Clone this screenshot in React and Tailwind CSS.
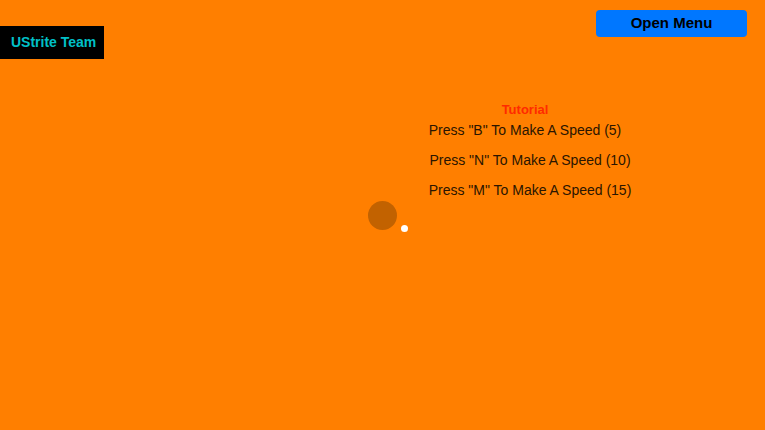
export default function App() {
  return (
    <div
      className="relative w-[765px] h-[430px] overflow-hidden bg-[#ff7f00]"
      style={{ fontFamily: '"Liberation Sans", Arial, sans-serif' }}
    >
      <div className="flex items-start justify-between">
        <div className="mt-[26px] w-[104px] h-[33px] bg-black flex items-center pl-[11px] text-[14px] font-bold text-[#00c0c8]">
          UStrite Team
        </div>
        <button className="mt-[10px] mr-[18px] w-[151px] h-[27px] rounded-[4px] bg-[#0077ff] text-[15px] font-bold text-black flex items-center justify-center">
          Open Menu
        </button>
      </div>

      <div className="absolute left-[410px] top-[102px] w-[240px] flex flex-col items-center text-[14px] text-[#2a1500]">
        <div className="text-[13px] font-bold text-[#ff2a00] ml-[-10px] leading-[16px]">Tutorial</div>
        <div className="leading-[16px] mt-[4px] ml-[-10px]">Press "B" To Make A Speed (5)</div>
        <div className="leading-[16px] mt-[14px]">Press "N" To Make A Speed (10)</div>
        <div className="leading-[16px] mt-[14px]">Press "M" To Make A Speed (15)</div>
      </div>

      <div className="absolute left-[368px] top-[201px] w-[29px] h-[29px] rounded-full bg-[#c26200]" />
      <div className="absolute left-[401px] top-[225px] w-[7px] h-[7px] rounded-full bg-white" />
    </div>
  );
}
